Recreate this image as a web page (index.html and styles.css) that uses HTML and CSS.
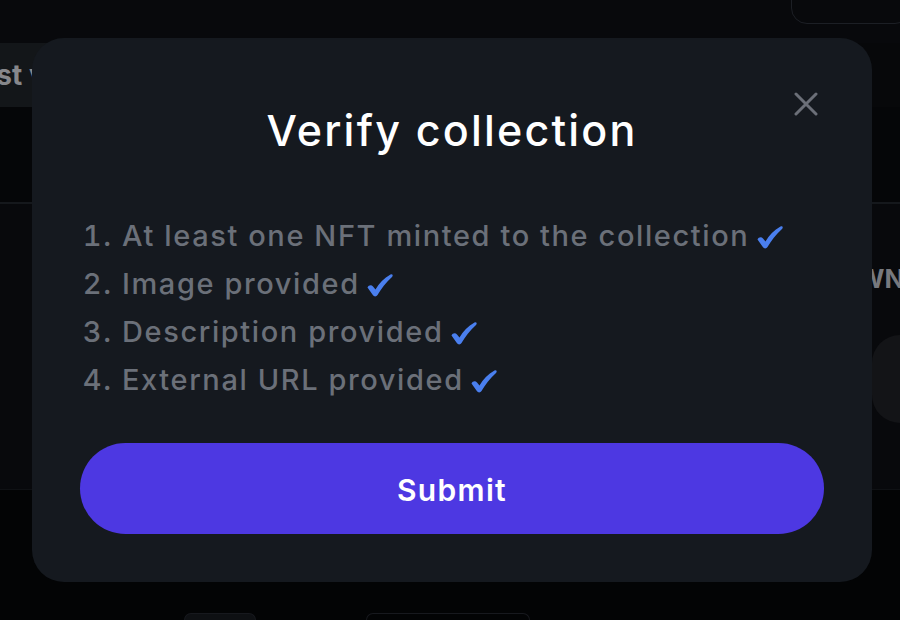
FILE: index.html
```html
<!DOCTYPE html>
<html lang="en">
<head>
<meta charset="utf-8">
<title>Verify collection</title>
<link rel="stylesheet" href="styles.css">
</head>
<body>
<div class="page">
  <header class="topbar">
    <div class="topbar-btn"></div>
  </header>
  <nav class="tabs">
    <div class="tab"><span class="tab-label">Highest volume</span></div>
  </nav>
  <div class="spacer"></div>
  <section class="content">
    <div class="content-side">
      <span class="side-label">OWNERS</span>
      <div class="side-card"></div>
    </div>
  </section>
  <footer class="footer">
    <div class="chip chip-a"></div>
    <div class="chip chip-b"></div>
  </footer>
</div>

<div class="overlay">
  <div class="modal" role="dialog" aria-labelledby="modal-title">
    <button class="close" aria-label="Close">
      <svg width="24" height="24" viewBox="0 0 24 24" fill="none" stroke="currentColor" stroke-width="3" stroke-linecap="round"><path d="M2 2 L22 22 M22 2 L2 22"/></svg>
    </button>
    <h2 class="title" id="modal-title">Verify collection</h2>
    <ol class="checks">
      <li>At least one NFT minted to the collection <svg class="tick" width="28" height="24" viewBox="0 0 28 24"><path d="M1.5 14.5 C2.5 12 5.5 11.5 7 13.5 L9.5 16.5 C13 10.5 18 5 24.5 1.5 C26.5 0.8 27.5 2.5 26 4 C20 9.5 15 16 11.5 22 C10.5 23.8 8 23.8 7 22.3 Z" fill="currentColor"/></svg></li>
      <li>Image provided <svg class="tick" width="28" height="24" viewBox="0 0 28 24"><path d="M1.5 14.5 C2.5 12 5.5 11.5 7 13.5 L9.5 16.5 C13 10.5 18 5 24.5 1.5 C26.5 0.8 27.5 2.5 26 4 C20 9.5 15 16 11.5 22 C10.5 23.8 8 23.8 7 22.3 Z" fill="currentColor"/></svg></li>
      <li>Description provided <svg class="tick" width="28" height="24" viewBox="0 0 28 24"><path d="M1.5 14.5 C2.5 12 5.5 11.5 7 13.5 L9.5 16.5 C13 10.5 18 5 24.5 1.5 C26.5 0.8 27.5 2.5 26 4 C20 9.5 15 16 11.5 22 C10.5 23.8 8 23.8 7 22.3 Z" fill="currentColor"/></svg></li>
      <li>External URL provided <svg class="tick" width="28" height="24" viewBox="0 0 28 24"><path d="M1.5 14.5 C2.5 12 5.5 11.5 7 13.5 L9.5 16.5 C13 10.5 18 5 24.5 1.5 C26.5 0.8 27.5 2.5 26 4 C20 9.5 15 16 11.5 22 C10.5 23.8 8 23.8 7 22.3 Z" fill="currentColor"/></svg></li>
    </ol>
    <button class="submit">Submit</button>
  </div>
</div>
</body>
</html>
```

FILE: styles.css
```css
* { box-sizing: border-box; }

html, body {
  margin: 0;
  height: 100%;
}

body {
  background: #07080a;
  font-family: Inter, "Noto Sans", sans-serif;
  overflow: hidden;
}

.page {
  display: flex;
  flex-direction: column;
  height: 620px;
}

.topbar {
  height: 43px;
  background: #08090c;
  display: flex;
  justify-content: flex-end;
}

.topbar-btn {
  width: 120px;
  height: 44px;
  margin-top: -20px;
  margin-right: -11px;
  border: 1px solid #1c1f25;
  border-radius: 16px;
}

.tabs {
  height: 64px;
  display: flex;
  background: #07080a;
}

.tab {
  width: 220px;
  background: #131619;
  display: flex;
  align-items: center;
  overflow: hidden;
  border-radius: 0 16px 16px 0;
}

.tab-label {
  margin-left: -84px;
  color: #86878b;
  font-size: 28px;
  font-weight: 700;
  white-space: nowrap;
}

.spacer {
  height: 97px;
  background: #050608;
  border-bottom: 2px solid #15181c;
}

.content {
  height: 285px;
  background: #08090c;
  display: flex;
  justify-content: flex-end;
}

.content-side {
  width: 28px;
  display: flex;
  flex-direction: column;
  overflow: hidden;
}

.side-label {
  margin-top: 60px;
  color: #77797e;
  font-size: 26px;
  font-weight: 700;
  line-height: 30px;
  white-space: nowrap;
  margin-left: -34px;
}

.side-card {
  margin-top: 41px;
  width: 60px;
  height: 88px;
  background: #131417;
  border-radius: 28px;
}

.footer {
  flex: 1;
  background: #030405;
  border-top: 1px solid #0f1114;
  display: flex;
  align-items: flex-end;
  gap: 110px;
  padding-left: 184px;
}

.chip {
  height: 7px;
  border: 1px solid #17191e;
  border-bottom: none;
  border-radius: 20px 20px 0 0;
}

.chip-a { width: 72px; background: #0e1013; }
.chip-b { width: 164px; }

.overlay {
  position: fixed;
  inset: 0;
  display: flex;
  align-items: center;
  justify-content: center;
  padding-left: 4px;
}

.modal {
  position: relative;
  width: 840px;
  height: 544px;
  background: #15191f;
  border-radius: 32px;
  padding: 56px 48px 48px;
  display: flex;
  flex-direction: column;
}

.close {
  position: absolute;
  top: 54px;
  right: 54px;
  width: 24px;
  height: 24px;
  padding: 0;
  border: 0;
  background: none;
  color: #6b6f78;
  cursor: pointer;
}

.close svg { display: block; }

.title {
  margin: 0;
  text-align: center;
  color: #ffffff;
  font-size: 43px;
  font-weight: 500;
  line-height: 72px;
  letter-spacing: 2.2px;
}

.checks {
  margin: 46px 0 0;
  padding-left: 42px;
  color: #6b7079;
  font-size: 29px;
  font-weight: 500;
  line-height: 48px;
  letter-spacing: 1.6px;
}

.tick {
  color: #4a7fee;
  vertical-align: -3px;
  margin-left: -3px;
}

.submit {
  margin-top: 39px;
  height: 92px;
  border: 0;
  border-radius: 46px;
  background: #4d38e2;
  color: #ffffff;
  font-family: inherit;
  font-size: 30px;
  font-weight: 600;
  letter-spacing: 1.3px;
  padding-top: 3px;
  cursor: pointer;
}
```
